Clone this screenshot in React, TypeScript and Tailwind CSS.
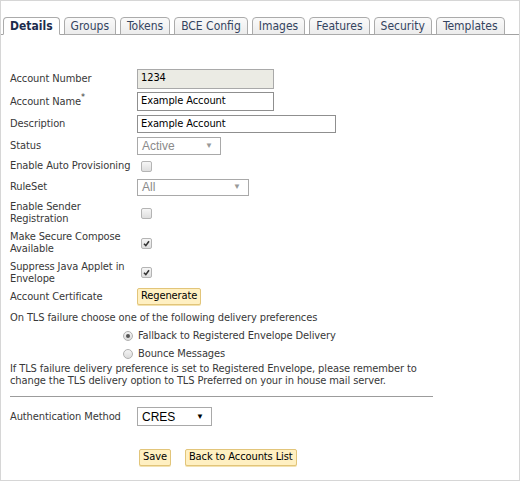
import React from "react";

const TABS = ["Details", "Groups", "Tokens", "BCE Config", "Images", "Features", "Security", "Templates"];

const FONT = "[font-family:'DejaVu_Sans_Condensed','DejaVu_Sans',sans-serif]";

function Checkbox({ checked }: { checked?: boolean }) {
  return (
    <span className="ml-[4px] flex h-[11px] w-[11px] items-center justify-center rounded-[2px] border border-[#b4b4b4] bg-gradient-to-b from-[#f6f6f6] to-[#dedede]">
      {checked ? (
        <svg width="7" height="7" viewBox="0 0 7 7">
          <path d="M1 3.8 L2.8 5.6 L6 1.2" stroke="#333" strokeWidth="1.6" fill="none" />
        </svg>
      ) : null}
    </span>
  );
}

function Radio({ on, label }: { on?: boolean; label: string }) {
  return (
    <div className="flex h-[18px] items-center pl-[113px]">
      <span className="flex h-[10px] w-[10px] items-center justify-center rounded-full border border-[#b0b0b0] bg-gradient-to-b from-[#f4f4f4] to-[#dcdcdc]">
        {on ? <span className="h-[4px] w-[4px] rounded-full bg-[#555]" /> : null}
      </span>
      <span className="ml-[5px]">{label}</span>
    </div>
  );
}

function Select({ value, w, h, dim }: { value: string; w: string; h: string; dim?: boolean }) {
  return (
    <div
      className={[
        "flex items-center justify-between border border-[#a9a9a9] bg-white pl-[4px] pr-[7px] tracking-normal",
        "[font-family:'Liberation_Sans',Arial,sans-serif] text-[12px]",
        w,
        h,
        dim ? "text-[#8a8a8a]" : "text-black",
      ].join(" ")}
    >
      <span>{value}</span>
      <span className={["text-[8px]", dim ? "text-[#999]" : "text-black"].join(" ")}>▼</span>
    </div>
  );
}

function Row({ label, h, children }: { label: React.ReactNode; h: string; children?: React.ReactNode }) {
  return (
    <div className={["flex items-center", h].join(" ")}>
      <div className="w-[127px] shrink-0 leading-[12px]">{label}</div>
      <div className="flex items-center">{children}</div>
    </div>
  );
}

function YellowButton({ children }: { children: React.ReactNode }) {
  return (
    <span className="flex h-[17px] items-center rounded-[2px] border border-[#e2c57a] bg-[#fff0c2] px-[3px] text-[11px] text-black shadow-[0_1px_0_#f3e2b0]">
      {children}
    </span>
  );
}

export default function App() {
  return (
    <div className={["h-[481px] w-[520px] overflow-hidden border border-[#d6d6d6] bg-white text-[11px] tracking-[-0.1px] text-[#383838]", FONT].join(" ")}>
      {/* tabs */}
      <div className="mt-[16px] flex items-end gap-[4px] border-b border-[#a2a2a2] pl-[2px]">
        {TABS.map((t, i) => (
          <div
            key={t}
            className={[
              "-mb-px flex h-[18px] items-center rounded-t-[4px] border border-[#ababab] px-[6px] text-[12px] tracking-normal",
              i === 0
                ? "border-b-white bg-white font-bold text-[#1c2c4c]"
                : "bg-gradient-to-b from-[#fafafa] to-[#ececec] text-[#34445f]",
            ].join(" ")}
          >
            {t}
          </div>
        ))}
      </div>

      <div className="pl-[9px]">
        {/* form */}
        <div className="mt-[32px]">
          <Row label="Account Number" h="h-[23px]">
            <div className="flex h-[20px] w-[137px] items-center border border-[#a9a9a9] bg-[#ebebe4] px-[3px] text-[11px] text-black">
              1234
            </div>
          </Row>
          <Row
            label={
              <span>
                Account Name<sup className="text-[9px]">*</sup>
              </span>
            }
            h="h-[23px]"
          >
            <div className="flex h-[19px] w-[137px] items-center border border-[#8f8f8f] bg-white px-[3px] text-black">
              Example Account
            </div>
          </Row>
          <Row label="Description" h="h-[22px]">
            <div className="flex h-[18px] w-[199px] items-center border border-[#8f8f8f] bg-white px-[3px] text-black">
              Example Account
            </div>
          </Row>
          <Row label="Status" h="h-[21px]">
            <Select value="Active" w="w-[84px]" h="h-[18px]" dim />
          </Row>
          <Row label="Enable Auto Provisioning" h="h-[20px]">
            <Checkbox />
          </Row>
          <Row label="RuleSet" h="h-[22px]">
            <Select value="All" w="w-[112px]" h="h-[17px]" dim />
          </Row>
          <Row label={<>Enable Sender<br />Registration</>} h="h-[30px]">
            <Checkbox />
          </Row>
          <Row label={<>Make Secure Compose<br />Available</>} h="h-[30px]">
            <Checkbox checked />
          </Row>
          <Row label={<>Suppress Java Applet in<br />Envelope</>} h="h-[29px]">
            <Checkbox checked />
          </Row>
          <Row label="Account Certificate" h="h-[19px]">
            <YellowButton>Regenerate</YellowButton>
          </Row>
        </div>

        {/* TLS preferences */}
        <div className="mt-[6px] leading-[12px]">On TLS failure choose one of the following delivery preferences</div>
        <div className="mt-[3px]">
          <Radio on label="Fallback to Registered Envelope Delivery" />
          <Radio label="Bounce Messages" />
        </div>
        <p className="leading-[12px]">
          If TLS failure delivery preference is set to Registered Envelope, please remember to
          <br />
          change the TLS delivery option to TLS Preferred on your in house mail server.
        </p>

        <div className="mt-[9px] w-[423px] border-t border-[#9c9c9c]" />

        <div className="mt-[10px]">
          <Row label="Authentication Method" h="h-[19px]">
            <Select value="CRES" w="w-[75px]" h="h-[19px]" />
          </Row>
        </div>

        <div className="mt-[23px] flex gap-[14px] pl-[129px]">
          <YellowButton>Save</YellowButton>
          <YellowButton>Back to Accounts List</YellowButton>
        </div>
      </div>
    </div>
  );
}
